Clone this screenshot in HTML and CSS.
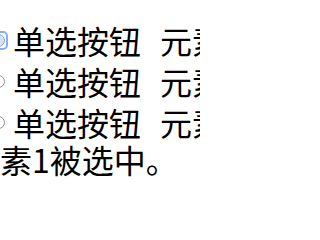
FILE: index.html
```html
<!DOCTYPE html>
<html lang="zh">
<head>
<meta charset="utf-8">
<link rel="stylesheet" href="styles.css">
</head>
<body>
<div class="page">
  <div class="row"><span class="radio checked"></span><span class="label">单选按钮</span><span class="label">元素1</span></div>
  <div class="row"><span class="radio"></span><span class="label">单选按钮</span><span class="label">元素2</span></div>
  <div class="row"><span class="radio"></span><span class="label">单选按钮</span><span class="label">元素3</span></div>
  <p class="result">素1被选中。</p>
</div>
</body>
</html>
```
FILE: styles.css
```css
html, body {
  margin: 0;
  padding: 0;
  background: #fff;
  overflow: hidden;
}
.page {
  width: 200px;
  height: 200px;
  overflow: hidden;
  padding-top: 20px;
  box-sizing: border-box;
  font-family: "Noto Sans CJK SC", "Noto Sans", sans-serif;
  font-size: 32px;
  color: #000;
}
.row {
  display: flex;
  align-items: center;
  height: 41px;
  white-space: nowrap;
}
.radio {
  position: relative;
  flex: none;
  width: 11px;
  height: 11px;
  border: 1px solid #8f8f8f;
  border-radius: 50%;
  margin-left: -8px;
  margin-right: 8px;
  background: #fff;
}
.radio.checked {
  border-color: #7ea6e0;
  background: #d4e3f8;
}
.radio.checked::after {
  content: "";
  position: absolute;
  inset: -4px;
  border: 2px solid #86aeea;
  border-radius: 5px;
}
.label {
  flex: none;
  line-height: 41px;
}
.label + .label {
  margin-left: 19px;
}
.result {
  margin: 0;
  line-height: 41px;
  white-space: nowrap;
  margin-top: -4px;
}
```
